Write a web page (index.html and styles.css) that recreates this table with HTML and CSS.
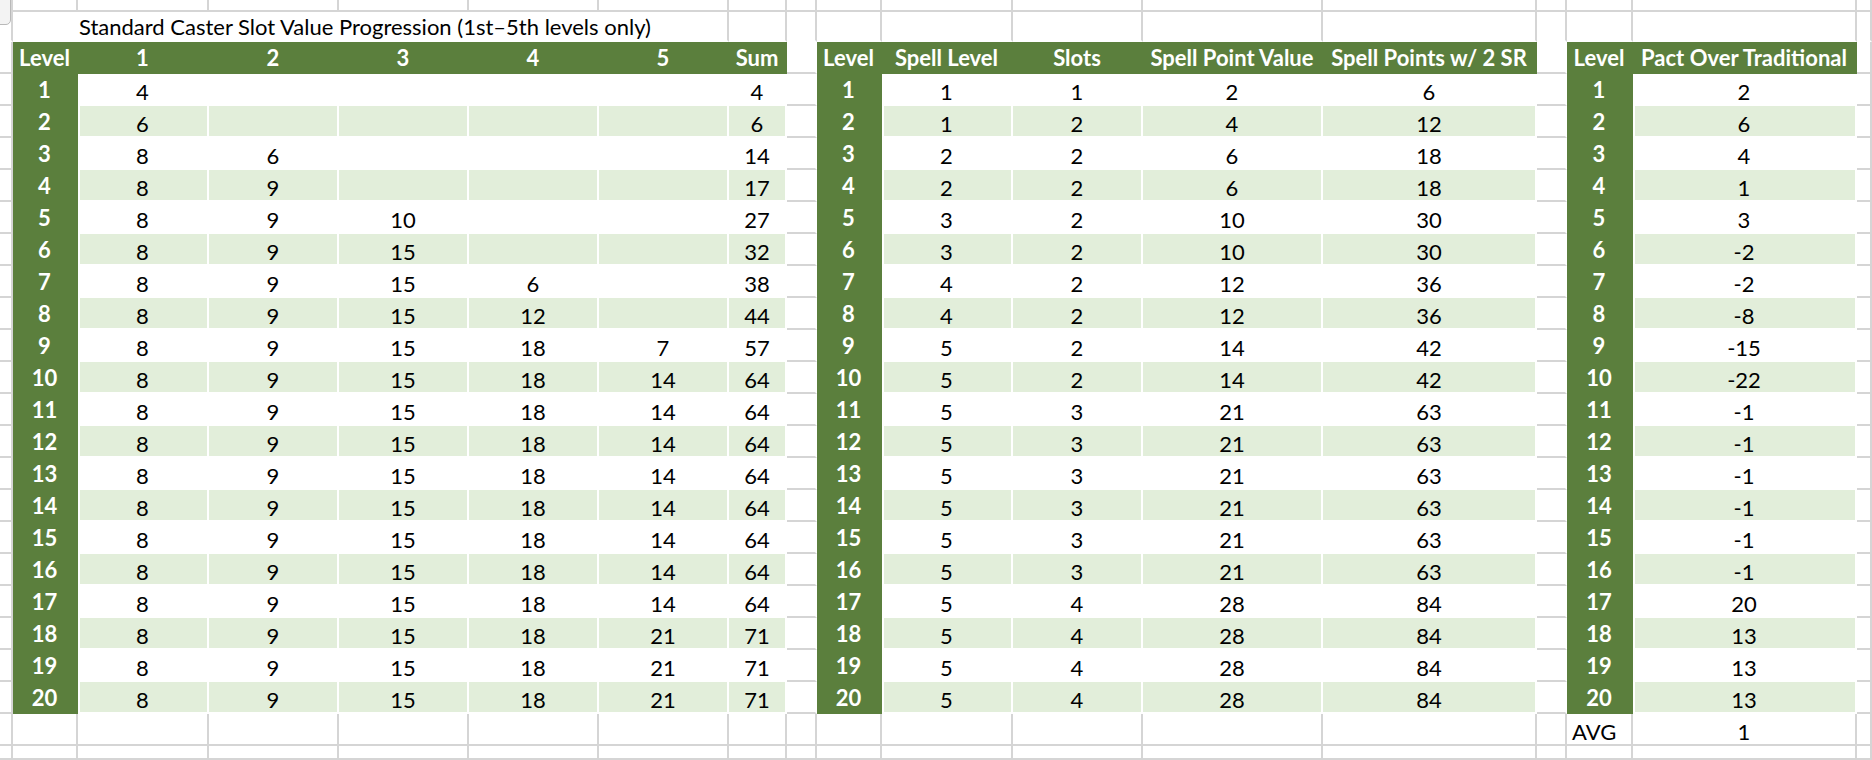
FILE: index.html
```html
<!DOCTYPE html>
<html>
<head>
<meta charset="utf-8">
<title>Standard Caster Slot Value Progression</title>
<link rel="stylesheet" href="styles.css">
</head>
<body>
<div class="sheet">
  <div class="corner"></div>

  <div class="row top"><div class="c"></div><div class="c"></div><div class="c"></div><div class="c"></div><div class="c"></div><div class="c"></div><div class="c"></div><div class="c"></div><div class="c"></div><div class="c"></div><div class="c"></div><div class="c"></div><div class="c"></div><div class="c"></div><div class="c"></div><div class="c"></div><div class="c"></div><div class="c"></div></div>

  <div class="row titlerow"><div class="c"></div><div class="c title">Standard Caster Slot Value Progression (1st–5th levels only)</div><div class="c"></div><div class="c"></div><div class="c"></div><div class="c"></div><div class="c"></div><div class="c"></div><div class="c"></div><div class="c"></div><div class="c"></div><div class="c"></div><div class="c"></div></div>

  <div class="row head"><div class="c"></div><div class="c hd">Level</div><div class="c hd">1</div><div class="c hd">2</div><div class="c hd">3</div><div class="c hd">4</div><div class="c hd">5</div><div class="c hd">Sum</div><div class="c g"></div><div class="c hd">Level</div><div class="c hd">Spell Level</div><div class="c hd">Slots</div><div class="c hd">Spell Point Value</div><div class="c hd">Spell Points w/ 2 SR</div><div class="c g"></div><div class="c hd">Level</div><div class="c hd">Pact Over Traditional</div><div class="c"></div></div>

  <div class="row odd"><div class="c"></div><div class="c lv">1</div><div class="c d d1">4</div><div class="c d"></div><div class="c d"></div><div class="c d"></div><div class="c d"></div><div class="c d">4</div><div class="c g"></div><div class="c lv">1</div><div class="c d d1">1</div><div class="c d">1</div><div class="c d">2</div><div class="c d">6</div><div class="c g"></div><div class="c lv">1</div><div class="c d d1">2</div><div class="c"></div></div>
  <div class="row even"><div class="c"></div><div class="c lv">2</div><div class="c d d1">6</div><div class="c d"></div><div class="c d"></div><div class="c d"></div><div class="c d"></div><div class="c d">6</div><div class="c g"></div><div class="c lv">2</div><div class="c d d1">1</div><div class="c d">2</div><div class="c d">4</div><div class="c d">12</div><div class="c g"></div><div class="c lv">2</div><div class="c d d1">6</div><div class="c"></div></div>
  <div class="row odd"><div class="c"></div><div class="c lv">3</div><div class="c d d1">8</div><div class="c d">6</div><div class="c d"></div><div class="c d"></div><div class="c d"></div><div class="c d">14</div><div class="c g"></div><div class="c lv">3</div><div class="c d d1">2</div><div class="c d">2</div><div class="c d">6</div><div class="c d">18</div><div class="c g"></div><div class="c lv">3</div><div class="c d d1">4</div><div class="c"></div></div>
  <div class="row even"><div class="c"></div><div class="c lv">4</div><div class="c d d1">8</div><div class="c d">9</div><div class="c d"></div><div class="c d"></div><div class="c d"></div><div class="c d">17</div><div class="c g"></div><div class="c lv">4</div><div class="c d d1">2</div><div class="c d">2</div><div class="c d">6</div><div class="c d">18</div><div class="c g"></div><div class="c lv">4</div><div class="c d d1">1</div><div class="c"></div></div>
  <div class="row odd"><div class="c"></div><div class="c lv">5</div><div class="c d d1">8</div><div class="c d">9</div><div class="c d">10</div><div class="c d"></div><div class="c d"></div><div class="c d">27</div><div class="c g"></div><div class="c lv">5</div><div class="c d d1">3</div><div class="c d">2</div><div class="c d">10</div><div class="c d">30</div><div class="c g"></div><div class="c lv">5</div><div class="c d d1">3</div><div class="c"></div></div>
  <div class="row even"><div class="c"></div><div class="c lv">6</div><div class="c d d1">8</div><div class="c d">9</div><div class="c d">15</div><div class="c d"></div><div class="c d"></div><div class="c d">32</div><div class="c g"></div><div class="c lv">6</div><div class="c d d1">3</div><div class="c d">2</div><div class="c d">10</div><div class="c d">30</div><div class="c g"></div><div class="c lv">6</div><div class="c d d1">-2</div><div class="c"></div></div>
  <div class="row odd"><div class="c"></div><div class="c lv">7</div><div class="c d d1">8</div><div class="c d">9</div><div class="c d">15</div><div class="c d">6</div><div class="c d"></div><div class="c d">38</div><div class="c g"></div><div class="c lv">7</div><div class="c d d1">4</div><div class="c d">2</div><div class="c d">12</div><div class="c d">36</div><div class="c g"></div><div class="c lv">7</div><div class="c d d1">-2</div><div class="c"></div></div>
  <div class="row even"><div class="c"></div><div class="c lv">8</div><div class="c d d1">8</div><div class="c d">9</div><div class="c d">15</div><div class="c d">12</div><div class="c d"></div><div class="c d">44</div><div class="c g"></div><div class="c lv">8</div><div class="c d d1">4</div><div class="c d">2</div><div class="c d">12</div><div class="c d">36</div><div class="c g"></div><div class="c lv">8</div><div class="c d d1">-8</div><div class="c"></div></div>
  <div class="row odd"><div class="c"></div><div class="c lv">9</div><div class="c d d1">8</div><div class="c d">9</div><div class="c d">15</div><div class="c d">18</div><div class="c d">7</div><div class="c d">57</div><div class="c g"></div><div class="c lv">9</div><div class="c d d1">5</div><div class="c d">2</div><div class="c d">14</div><div class="c d">42</div><div class="c g"></div><div class="c lv">9</div><div class="c d d1">-15</div><div class="c"></div></div>
  <div class="row even"><div class="c"></div><div class="c lv">10</div><div class="c d d1">8</div><div class="c d">9</div><div class="c d">15</div><div class="c d">18</div><div class="c d">14</div><div class="c d">64</div><div class="c g"></div><div class="c lv">10</div><div class="c d d1">5</div><div class="c d">2</div><div class="c d">14</div><div class="c d">42</div><div class="c g"></div><div class="c lv">10</div><div class="c d d1">-22</div><div class="c"></div></div>
  <div class="row odd"><div class="c"></div><div class="c lv">11</div><div class="c d d1">8</div><div class="c d">9</div><div class="c d">15</div><div class="c d">18</div><div class="c d">14</div><div class="c d">64</div><div class="c g"></div><div class="c lv">11</div><div class="c d d1">5</div><div class="c d">3</div><div class="c d">21</div><div class="c d">63</div><div class="c g"></div><div class="c lv">11</div><div class="c d d1">-1</div><div class="c"></div></div>
  <div class="row even"><div class="c"></div><div class="c lv">12</div><div class="c d d1">8</div><div class="c d">9</div><div class="c d">15</div><div class="c d">18</div><div class="c d">14</div><div class="c d">64</div><div class="c g"></div><div class="c lv">12</div><div class="c d d1">5</div><div class="c d">3</div><div class="c d">21</div><div class="c d">63</div><div class="c g"></div><div class="c lv">12</div><div class="c d d1">-1</div><div class="c"></div></div>
  <div class="row odd"><div class="c"></div><div class="c lv">13</div><div class="c d d1">8</div><div class="c d">9</div><div class="c d">15</div><div class="c d">18</div><div class="c d">14</div><div class="c d">64</div><div class="c g"></div><div class="c lv">13</div><div class="c d d1">5</div><div class="c d">3</div><div class="c d">21</div><div class="c d">63</div><div class="c g"></div><div class="c lv">13</div><div class="c d d1">-1</div><div class="c"></div></div>
  <div class="row even"><div class="c"></div><div class="c lv">14</div><div class="c d d1">8</div><div class="c d">9</div><div class="c d">15</div><div class="c d">18</div><div class="c d">14</div><div class="c d">64</div><div class="c g"></div><div class="c lv">14</div><div class="c d d1">5</div><div class="c d">3</div><div class="c d">21</div><div class="c d">63</div><div class="c g"></div><div class="c lv">14</div><div class="c d d1">-1</div><div class="c"></div></div>
  <div class="row odd"><div class="c"></div><div class="c lv">15</div><div class="c d d1">8</div><div class="c d">9</div><div class="c d">15</div><div class="c d">18</div><div class="c d">14</div><div class="c d">64</div><div class="c g"></div><div class="c lv">15</div><div class="c d d1">5</div><div class="c d">3</div><div class="c d">21</div><div class="c d">63</div><div class="c g"></div><div class="c lv">15</div><div class="c d d1">-1</div><div class="c"></div></div>
  <div class="row even"><div class="c"></div><div class="c lv">16</div><div class="c d d1">8</div><div class="c d">9</div><div class="c d">15</div><div class="c d">18</div><div class="c d">14</div><div class="c d">64</div><div class="c g"></div><div class="c lv">16</div><div class="c d d1">5</div><div class="c d">3</div><div class="c d">21</div><div class="c d">63</div><div class="c g"></div><div class="c lv">16</div><div class="c d d1">-1</div><div class="c"></div></div>
  <div class="row odd"><div class="c"></div><div class="c lv">17</div><div class="c d d1">8</div><div class="c d">9</div><div class="c d">15</div><div class="c d">18</div><div class="c d">14</div><div class="c d">64</div><div class="c g"></div><div class="c lv">17</div><div class="c d d1">5</div><div class="c d">4</div><div class="c d">28</div><div class="c d">84</div><div class="c g"></div><div class="c lv">17</div><div class="c d d1">20</div><div class="c"></div></div>
  <div class="row even"><div class="c"></div><div class="c lv">18</div><div class="c d d1">8</div><div class="c d">9</div><div class="c d">15</div><div class="c d">18</div><div class="c d">21</div><div class="c d">71</div><div class="c g"></div><div class="c lv">18</div><div class="c d d1">5</div><div class="c d">4</div><div class="c d">28</div><div class="c d">84</div><div class="c g"></div><div class="c lv">18</div><div class="c d d1">13</div><div class="c"></div></div>
  <div class="row odd"><div class="c"></div><div class="c lv">19</div><div class="c d d1">8</div><div class="c d">9</div><div class="c d">15</div><div class="c d">18</div><div class="c d">21</div><div class="c d">71</div><div class="c g"></div><div class="c lv">19</div><div class="c d d1">5</div><div class="c d">4</div><div class="c d">28</div><div class="c d">84</div><div class="c g"></div><div class="c lv">19</div><div class="c d d1">13</div><div class="c"></div></div>
  <div class="row even"><div class="c"></div><div class="c lv">20</div><div class="c d d1">8</div><div class="c d">9</div><div class="c d">15</div><div class="c d">18</div><div class="c d">21</div><div class="c d">71</div><div class="c g"></div><div class="c lv">20</div><div class="c d d1">5</div><div class="c d">4</div><div class="c d">28</div><div class="c d">84</div><div class="c g"></div><div class="c lv">20</div><div class="c d d1">13</div><div class="c"></div></div>

  <div class="row"><div class="c"></div><div class="c"></div><div class="c"></div><div class="c"></div><div class="c"></div><div class="c"></div><div class="c"></div><div class="c"></div><div class="c"></div><div class="c"></div><div class="c"></div><div class="c"></div><div class="c"></div><div class="c"></div><div class="c"></div><div class="c avg">AVG</div><div class="c">1</div><div class="c"></div></div>

  <div class="row bottom"><div class="c"></div><div class="c"></div><div class="c"></div><div class="c"></div><div class="c"></div><div class="c"></div><div class="c"></div><div class="c"></div><div class="c"></div><div class="c"></div><div class="c"></div><div class="c"></div><div class="c"></div><div class="c"></div><div class="c"></div><div class="c"></div><div class="c"></div><div class="c"></div></div>
</div>
</body>
</html>
```

FILE: styles.css
```css
html, body {
  margin: 0;
  padding: 0;
  background: #ffffff;
  overflow: hidden;
}

.sheet {
  position: relative;
  width: 1872px;
  height: 760px;
  display: grid;
  grid-template-columns: 13px 65px 131px 130px 130px 130px 130px 58px 30px 65px 131px 130px 180px 214px 30px 66px 224px 15px;
  grid-template-rows: 12px 30px 32px repeat(20, 32px) 32px 14px;
  font-family: Lato, "Open Sans", "Liberation Sans", sans-serif;
  color: #000;
}

.row {
  display: contents;
}

.c {
  box-sizing: border-box;
  border-right: 2px solid #d5d5d5;
  border-bottom: 2px solid #d5d5d5;
  background: #ffffff;
  display: flex;
  align-items: flex-end;
  justify-content: center;
  font-size: 22px;
  line-height: 1;
  padding-bottom: 1px;
  white-space: nowrap;
}

.titlerow .c {
  border-bottom-color: transparent;
}

.title {
  grid-column: span 6;
  justify-content: flex-start;
  padding-left: 66px;
  padding-bottom: 2px;
}

.hd,
.lv {
  background: #5b7f3d;
  border-color: #5b7f3d;
  color: #ffffff;
  font-weight: 700;
  padding-bottom: 3px;
}

.d {
  border-color: #ffffff;
}

.even .d {
  background: #e2eeda;
}

.even .d1 {
  box-shadow: inset 2px 0 0 #ffffff;
}

.g {
  border-right-color: transparent;
}

.avg {
  justify-content: flex-start;
  padding-left: 5px;
}

.corner {
  position: absolute;
  left: -5px;
  top: -5px;
  width: 16px;
  height: 30px;
  box-sizing: border-box;
  border: 1px solid #b9b9b9;
  border-radius: 5px;
  background: #f3f3f3;
  z-index: 2;
}
```
